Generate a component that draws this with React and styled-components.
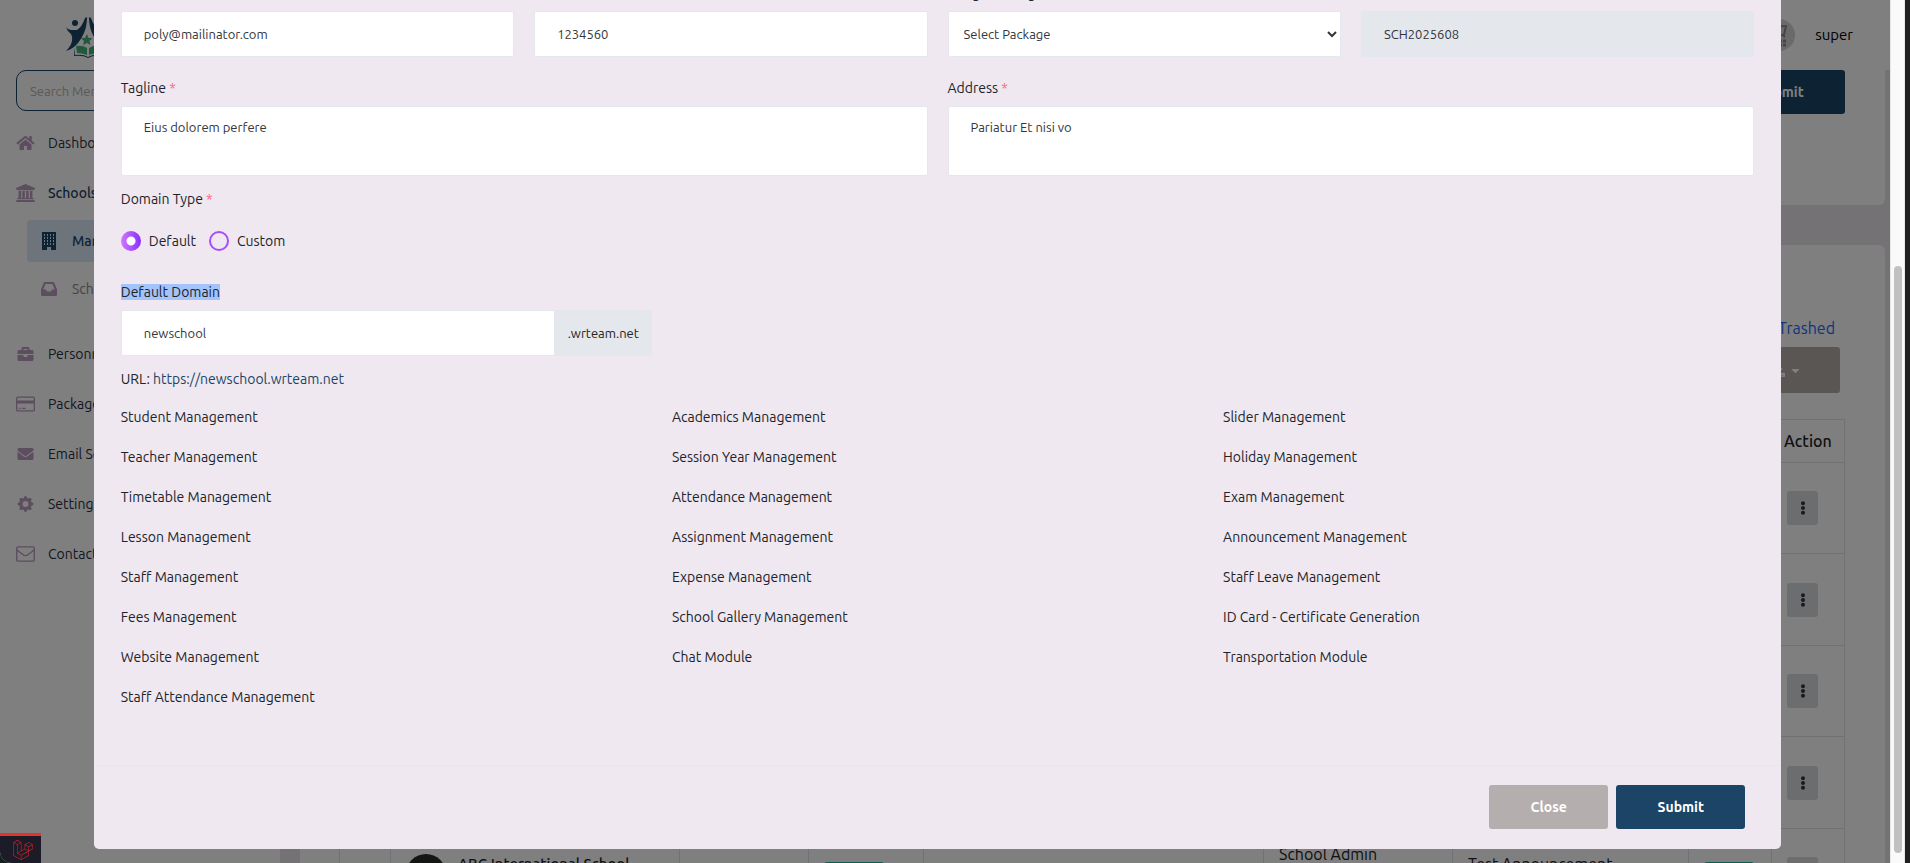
import React, { useState } from 'react';
import styled, { createGlobalStyle, css } from 'styled-components';
import {
  FaHome,
  FaBriefcase,
  FaEnvelope,
  FaEllipsisV,
  FaCaretDown,
  FaDownload,
} from 'react-icons/fa';
import { BsGearFill } from 'react-icons/bs';
import { SiLaravel } from 'react-icons/si';

const features = [
  'Student Management',
  'Academics Management',
  'Slider Management',
  'Teacher Management',
  'Session Year Management',
  'Holiday Management',
  'Timetable Management',
  'Attendance Management',
  'Exam Management',
  'Lesson Management',
  'Assignment Management',
  'Announcement Management',
  'Staff Management',
  'Expense Management',
  'Staff Leave Management',
  'Fees Management',
  'School Gallery Management',
  'ID Card - Certificate Generation',
  'Website Management',
  'Chat Module',
  'Transportation Module',
  'Staff Attendance Management',
];

const columns = [51, 289, 129, 115, 340, 189, 236, 83, 73];

const BuildingIcon = () => (
  <svg viewBox='0 0 14 18' aria-hidden='true'>
    <path fill='currentColor' d='M0 0h14v18H9v-3H5v3H0z' />
    {[2, 5, 8, 11].map((y) =>
      [2, 5, 8, 11].map((x) => (
        <rect key={`${x}-${y}`} x={x} y={y} width='1' height='2' fill='#dde8f8' />
      ))
    )}
  </svg>
);

const BankIcon = () => (
  <svg viewBox='0 0 19 18' fill='currentColor' aria-hidden='true'>
    <path d='M9.500 0L19 4v1.500h-1.300V6.300H1.300V5.500H0V4z' />
    <path d='M2.600 7h2.500v7h1.200V7h2.500v7h1.300V7h2.500v7h1.300V7h2.500v7h1.200v1.300H1.300V14h1.300z' />
    <path d='M.6 16h17.800l.6 2H0z' />
  </svg>
);

const InboxIcon = () => (
  <svg viewBox='0 0 16 14' fill='currentColor' aria-hidden='true'>
    <path
      fillRule='evenodd'
      d='M3.800 0h8.400q.8 0 1.100.7L16 7.500V13q0 1-1 1H1q-1 0-1-1V7.500L2.700.7Q3 0 3.800 0zM4.500 2L2.300 7.500H5L6 9.500h4l1-2h2.700L11.500 2z'
    />
  </svg>
);

const CardIcon = () => (
  <svg viewBox='0 0 20 16' fill='currentColor' aria-hidden='true'>
    <path
      fillRule='evenodd'
      d='M2 0h16q2 0 2 2v12q0 2-2 2H2q-2 0-2-2V2Q0 0 2 0zM1.400 2v2.200h17.200V2q0-.6-.6-.6H2q-.6 0-.6.6zm0 5.600V14q0 .6.6.6h16q.6 0 .6-.6V7.600z'
    />
    <path d='M3 12h2v1.200H3zM6.500 12H10v1.200H6.500z' />
  </svg>
);

const EnvelopeIcon = () => (
  <svg
    viewBox='0 0 18 15'
    fill='none'
    stroke='currentColor'
    strokeWidth='1.300'
    aria-hidden='true'
  >
    <rect x='.7' y='.7' width='16.600' height='13.600' rx='1.300' />
    <path d='M.8 3.300q1.500 1.800 5.700 4.700 2.500 2 5 0 4.200-2.900 5.700-4.700' />
  </svg>
);

const Logo = () => (
  <svg width='48' height='44' viewBox='64 15 48 44' role='img' aria-label='Logo'>
    <g fill='#1b4466'>
      <circle cx='75' cy='23' r='3' />
      <circle cx='101' cy='23' r='3' />
      <path d='M66 27q2 3 6 3h5q5-3 8-12l2-1q0 9-3 16-2 5-6 10-5 6-12 8 5-5 6-10 1-4-1-7-4-3-5-7z' />
      <path d='M110 27q-2 3-6 3h-5q-5-3-8-12l-2-1q0 9 3 16 2 5 6 10 5 6 12 8-5-5-6-10-1-4 1-7 4-3 5-7z' />
      <path d='M75 47v8q8-1 13 2 5-3 13-2v-8l1 9q-9-1-14 2-5-3-14-2z' />
    </g>
    <g fill='#44b37a'>
      <path d='M87 34l1.500 4h4l-3 3 1 4-3.500-2-4 2 1-4-3-3h4z' />
      <path d='M76 46q7-1 11 2v7q-5-2-10-2zM100 46q-7-1-11 2v7q5-2 10-2z' />
    </g>
  </svg>
);

const Sidebar = () => (
  <Side>
    <Brand>
      <Logo />
    </Brand>
    <Search type='search' placeholder='Search Menu' aria-label='Search Menu' />
    <Menu>
      <MenuLink href='#dashboard'>
        <FaHome />
        Dashboard
      </MenuLink>
      <MenuLink href='#schools' $open>
        <BankIcon />
        Schools
      </MenuLink>
      <SubMenu>
        <SubLink href='#manage' $active>
          <BuildingIcon />
          Manage
        </SubLink>
        <SubLink href='#inquiry'>
          <InboxIcon />
          School
        </SubLink>
      </SubMenu>
      <MenuLink href='#personnel'>
        <FaBriefcase />
        Personnel
      </MenuLink>
      <MenuLink href='#package'>
        <CardIcon />
        Package
      </MenuLink>
      <MenuLink href='#email'>
        <FaEnvelope />
        Email Set
      </MenuLink>
      <MenuLink href='#settings'>
        <BsGearFill />
        Settings
      </MenuLink>
      <MenuLink href='#contact'>
        <EnvelopeIcon />
        Contact
      </MenuLink>
    </Menu>
  </Side>
);

const SchoolsTable = () => (
  <Table>
    <colgroup>
      {columns.map((width, index) => (
        <Col key={index} $width={width} />
      ))}
    </colgroup>
    <thead>
      <tr>
        {columns.slice(1).map((width, index) => (
          <th key={index} />
        ))}
        <th>Action</th>
      </tr>
    </thead>
    <tbody>
      {[1, 2, 3, 4].map((row) => (
        <tr key={row}>
          {columns.slice(1).map((width, index) => (
            <td key={index} />
          ))}
          <td>
            <MoreButton type='button' aria-label='Actions'>
              <FaEllipsisV />
            </MoreButton>
          </td>
        </tr>
      ))}
      <tr>
        <td />
        <td>
          <School>
            <SchoolLogo />
            <SchoolName>ABC International School</SchoolName>
          </School>
        </td>
        <td />
        <td>
          <Pill $width={60} />
        </td>
        <td />
        <td>
          <Admin>School Admin</Admin>
        </td>
        <td>
          <Plan>Test Announcement</Plan>
        </td>
        <td>
          <Pill $width={50} />
        </td>
        <td>
          <MoreButton type='button' aria-label='Actions'>
            <FaEllipsisV />
          </MoreButton>
        </td>
      </tr>
    </tbody>
  </Table>
);

const EditSchool = () => {
  const [domainType, setDomainType] = useState('default');
  const [domain, setDomain] = useState('newschool');

  return (
    <Dialog role='dialog' aria-modal='true' aria-label='Edit School'>
      <Body>
        <Row $columns={4}>
          <Field>
            <Label />
            <Input type='email' aria-label='Email' defaultValue='poly@mailinator.com' />
          </Field>
          <Field>
            <Label />
            <Input aria-label='Mobile' defaultValue='1234560' />
          </Field>
          <Field>
            <Label htmlFor='package'>Assign Package</Label>
            <Select id='package'>
              <option>Select Package</option>
            </Select>
          </Field>
          <Field>
            <Label />
            <Input aria-label='School Code' readOnly value='SCH2025608' />
          </Field>
        </Row>
        <Row $columns={2} $top={21}>
          <Field>
            <Label htmlFor='tagline'>
              Tagline <Required>*</Required>
            </Label>
            <TextArea id='tagline' defaultValue='Eius dolorem perfere' />
          </Field>
          <Field>
            <Label htmlFor='address'>
              Address <Required>*</Required>
            </Label>
            <TextArea id='address' defaultValue='Pariatur Et nisi vo' />
          </Field>
        </Row>
        <DomainType>
          <legend>
            Domain Type <Required>*</Required>
          </legend>
          <Options>
            <RadioLabel>
              <Radio
                name='domainType'
                checked={domainType === 'default'}
                onChange={() => setDomainType('default')}
              />
              Default
            </RadioLabel>
            <RadioLabel>
              <Radio
                name='domainType'
                checked={domainType === 'custom'}
                onChange={() => setDomainType('custom')}
              />
              Custom
            </RadioLabel>
          </Options>
        </DomainType>
        <Row $columns={3} $top={31}>
          <Field>
            <Label htmlFor='domain'>
              <Highlight>Default Domain</Highlight>
            </Label>
            <InputGroup>
              <Input
                id='domain'
                value={domain}
                onChange={(e) => setDomain(e.target.value)}
              />
              <Addon>.wrteam.net</Addon>
            </InputGroup>
          </Field>
        </Row>
        <Url>
          URL: <a href={`https://${domain}.wrteam.net`}>https://{domain}.wrteam.net</a>
        </Url>
        <Features>
          {features.map((feature) => (
            <li key={feature}>{feature}</li>
          ))}
        </Features>
      </Body>
      <Footer>
        <Button type='button' $secondary>
          Close
        </Button>
        <Button type='submit'>Submit</Button>
      </Footer>
    </Dialog>
  );
};

const App = () => (
  <Frame>
    <GlobalStyle />
    <Screen>
      <Page>
        <Sidebar />
        <Main>
          <Navbar>
            <Avatar viewBox='0 0 32 32' aria-hidden='true'>
              <circle cx='16' cy='16' r='16' fill='#d4d4d4' />
              <path
                d='M8 8l15-1-2 9H10zM19 16l3 2'
                fill='none'
                stroke='#8c8c8c'
                strokeWidth='2'
              />
              <path d='M8 22h16M8 26h16' stroke='#8c8c8c' strokeWidth='3' strokeDasharray='3 1' />
            </Avatar>
            super
          </Navbar>
          <Content>
            <FormCard>
              <Button type='submit'>Submit</Button>
            </FormCard>
            <ListCard>
              <Trashed href='#trashed'>Trashed</Trashed>
              <ExportButton type='button' aria-label='Export'>
                <FaDownload size={14} />
                <FaCaretDown size={13} />
              </ExportButton>
              <SchoolsTable />
            </ListCard>
          </Content>
        </Main>
      </Page>
      <Backdrop>
        <EditSchool />
      </Backdrop>
      <DebugBar type='button' aria-label='Debug bar'>
        <SiLaravel />
      </DebugBar>
    </Screen>
    <ScrollTrack>
      <ScrollThumb />
    </ScrollTrack>
    <Edge />
  </Frame>
);

export default App;

const GlobalStyle = createGlobalStyle`
  * {
    box-sizing: border-box;
  }

  body {
    margin: 0;
    font-family: Ubuntu, 'Noto Sans', sans-serif;
    font-size: 14px;
    line-height: 20px;
    font-variant-ligatures: none;
    color: #212329;
  }

  button, input, select, textarea {
    font-family: inherit;
  }

  a {
    text-decoration: none;
  }
`;

const Frame = styled.div`
  display: flex;
  height: 100vh;
  overflow: hidden;
  background: #14201f;
`;

const Screen = styled.div`
  position: relative;
  flex: 1;
  min-width: 0;
  overflow: hidden;
  border-bottom-left-radius: 12px;
`;

const Page = styled.div`
  display: flex;
  height: 100%;
  background: #fff;
  overflow: hidden;
`;

const Side = styled.aside`
  width: 280px;
  flex-shrink: 0;
  padding: 0 16px;
`;

const Brand = styled.div`
  height: 70px;
  padding: 15px 0 0 48px;
`;

const Search = styled.input`
  display: block;
  width: 100%;
  height: 41px;
  padding: 0 13px;
  border: 1px solid #1b4466;
  border-radius: 10px;
  background: #fff;
  font-size: 13px;

  &::placeholder {
    color: #b4b4b4;
  }
`;

const Menu = styled.nav`
  padding-top: 7px;
`;

const MenuLink = styled.a`
  display: flex;
  align-items: center;
  gap: 13px;
  height: 50px;
  color: #2c2e3f;

  svg {
    width: 19px;
    height: 16px;
    color: #b89cbd;
  }

  ${({ $open }) =>
    $open &&
    css`
      height: 49px;
      color: #1b4466;
      font-weight: 500;

      svg {
        height: 18px;
      }
    `}
`;

const SubMenu = styled.div`
  display: flex;
  flex-direction: column;
  gap: 6px;
  padding: 3px 0 19px 11px;
`;

const SubLink = styled.a`
  display: flex;
  align-items: center;
  gap: 15px;
  height: 42px;
  padding-left: 14px;
  border-radius: 4px;
  color: #888;

  svg {
    width: 16px;
    height: 14px;
    color: #b89cbd;
  }

  ${({ $active }) =>
    $active &&
    css`
      background: #dde8f8;
      color: #1b4466;
      font-weight: 500;

      svg {
        height: 18px;
        color: #1b4466;
      }
    `}
`;

const Main = styled.div`
  flex: 1;
  min-width: 0;
  display: flex;
  flex-direction: column;
`;

const Navbar = styled.header`
  display: flex;
  align-items: center;
  justify-content: flex-end;
  gap: 20px;
  height: 70px;
  padding-right: 37px;
  flex-shrink: 0;
  font-size: 15px;
  color: #000;
`;

const Avatar = styled.svg`
  width: 32px;
  height: 32px;
`;

const Content = styled.main`
  flex: 1;
  padding: 0 5px 0 20px;
  background: #ebe5ec;
`;

const FormCard = styled.section`
  display: flex;
  justify-content: flex-end;
  align-items: flex-start;
  height: 135px;
  padding-right: 40px;
  border-radius: 0 0 6px 6px;
  background: #fff;
`;

const ListCard = styled.section`
  display: flex;
  flex-direction: column;
  align-items: flex-end;
  margin-top: 40px;
  padding: 73px 40px 0;
  border-radius: 6px;
  background: #fff;
`;

const Trashed = styled.a`
  margin-right: 10px;
  font-size: 16px;
  color: #2468f5;
`;

const ExportButton = styled.button`
  display: flex;
  align-items: center;
  justify-content: flex-end;
  gap: 4px;
  width: 110px;
  height: 46px;
  margin: 9px 5px 26px 0;
  padding: 0 38px;
  border: 0;
  border-radius: 3px;
  background: #b5aca9;
  color: #fff;
`;

const Table = styled.table`
  width: 100%;
  table-layout: fixed;
  border-collapse: collapse;
  font-size: 16px;
  color: #222;

  th,
  td {
    border: 1px solid #e4e2ea;
    padding: 0 0 0 15px;
    text-align: left;
  }

  th {
    height: 43px;
    padding-left: 12px;
    font-weight: 500;
  }

  td {
    height: 92px;
  }

  tr:nth-child(odd) td {
    height: 91px;
  }
`;

const Col = styled.col`
  width: ${({ $width }) => $width}px;
`;

const MoreButton = styled.button`
  display: flex;
  align-items: center;
  justify-content: center;
  width: 31px;
  height: 34px;
  border: 0;
  border-radius: 3px;
  background: #d8dadd;
  color: #2c3640;
  font-size: 14px;
`;

const School = styled.div`
  display: flex;
  align-items: center;
  gap: 12px;
`;

const SchoolLogo = styled.span`
  width: 40px;
  height: 40px;
  border-radius: 50%;
  background: #2b2b2b;
`;

const SchoolName = styled.strong`
  height: 40px;
  font-size: 15px;
  font-weight: 500;
`;

const Admin = styled.div`
  height: 60px;
  font-size: 16px;
`;

const Plan = styled.div`
  height: 40px;
  font-size: 16px;
`;

const Pill = styled.div`
  width: ${({ $width }) => $width}px;
  height: 24px;
  border-radius: 3px;
  background: #1bb99a;
`;

const Backdrop = styled.div`
  position: absolute;
  inset: 0;
  display: flex;
  flex-direction: column;
  justify-content: flex-end;
  align-items: center;
  padding: 0 15px 14px 0;
  background: rgba(0, 0, 0, 0.5);
`;

const Dialog = styled.div`
  width: 90%;
  flex-shrink: 0;
  border-radius: 5px;
  background: #efe8f0;
`;

const Body = styled.div`
  padding: 20px 27px 48px;
`;

const Row = styled.div`
  display: grid;
  grid-template-columns: repeat(${({ $columns }) => $columns}, 1fr);
  gap: 20px;
  margin-top: ${({ $top = 0 }) => $top}px;
`;

const Field = styled.div`
  min-width: 0;
`;

const Label = styled.label`
  display: block;
  height: 20px;
  margin-bottom: 8px;
`;

const Required = styled.span`
  color: #fe6a88;
`;

const control = css`
  display: block;
  width: 100%;
  border: 1px solid #e4e7ee;
  border-radius: 2px;
  background: #fff;
  color: #32363c;
  font-size: 13px;
  outline: none;
`;

const Input = styled.input`
  ${control}
  height: 46px;
  padding: 0 22px;

  &:read-only {
    background: #e4e7eb;
  }
`;

const Select = styled.select`
  ${control}
  height: 46px;
  padding: 0 0 0 11px;
`;

const TextArea = styled.textarea`
  ${control}
  height: 70px;
  padding: 11px 22px;
  line-height: 18px;
  resize: none;
`;

const DomainType = styled.fieldset`
  margin: 13px 0 0;
  padding: 0;
  border: 0;

  legend {
    padding: 0;
  }
`;

const Options = styled.div`
  display: flex;
  gap: 13px;
  padding-top: 22px;
`;

const RadioLabel = styled.label`
  display: flex;
  align-items: center;
  gap: 8px;
`;

const Radio = styled.input.attrs({ type: 'radio' })`
  appearance: none;
  width: 20px;
  height: 20px;
  margin: 0;
  border: 2px solid #a64dff;
  border-radius: 50%;

  &:checked {
    border: 0;
    background: radial-gradient(circle, #fff 4px, transparent 5px),
      linear-gradient(to right, #d078ff, #8a2eff);
  }
`;

const Highlight = styled.span`
  background: #a3c4fb;
`;

const InputGroup = styled.div`
  display: flex;
`;

const Addon = styled.span`
  display: flex;
  align-items: center;
  flex-shrink: 0;
  padding: 0 13px;
  background: #e4e7eb;
  font-size: 13px;
`;

const Url = styled.p`
  margin: 13px 0 8px;

  a {
    color: #1b4466;
  }
`;

const Features = styled.ul`
  display: grid;
  grid-template-columns: repeat(3, 1fr);
  column-gap: 20px;
  margin: 0;
  padding: 0;
  list-style: none;

  li {
    padding: 10px 0;
  }
`;

const Footer = styled.div`
  display: flex;
  justify-content: flex-end;
  gap: 8px;
  padding: 19px 36px 20px;
  border-top: 1px solid #e4e7ee;
`;

const Button = styled.button`
  width: ${({ $secondary }) => ($secondary ? 119 : 129)}px;
  height: 44px;
  border: 0;
  border-radius: 3px;
  background: ${({ $secondary }) => ($secondary ? '#b5aeae' : '#1b4466')};
  color: #fff;
  font-size: 14px;
  font-weight: 700;
`;

const DebugBar = styled.button`
  position: absolute;
  left: 0;
  bottom: 0;
  width: 41px;
  height: 30px;
  padding: 4px 0 0 4px;
  border: 0;
  border-top: 3px solid #e8302a;
  background: #1b1c28;
  color: #d01f28;
  font-size: 20px;
  line-height: 20px;
`;

const ScrollTrack = styled.div`
  display: flex;
  justify-content: center;
  width: 15px;
  padding: 266px 0 10px;
  border: 1px solid #e6e6e6;
  border-width: 0 1px;
  background: #fafafa;
`;

const ScrollThumb = styled.div`
  width: 8px;
  border-radius: 4px;
  background: #c1c1c1;
`;

const Edge = styled.div`
  width: 5px;
  background: #202020;
`;
